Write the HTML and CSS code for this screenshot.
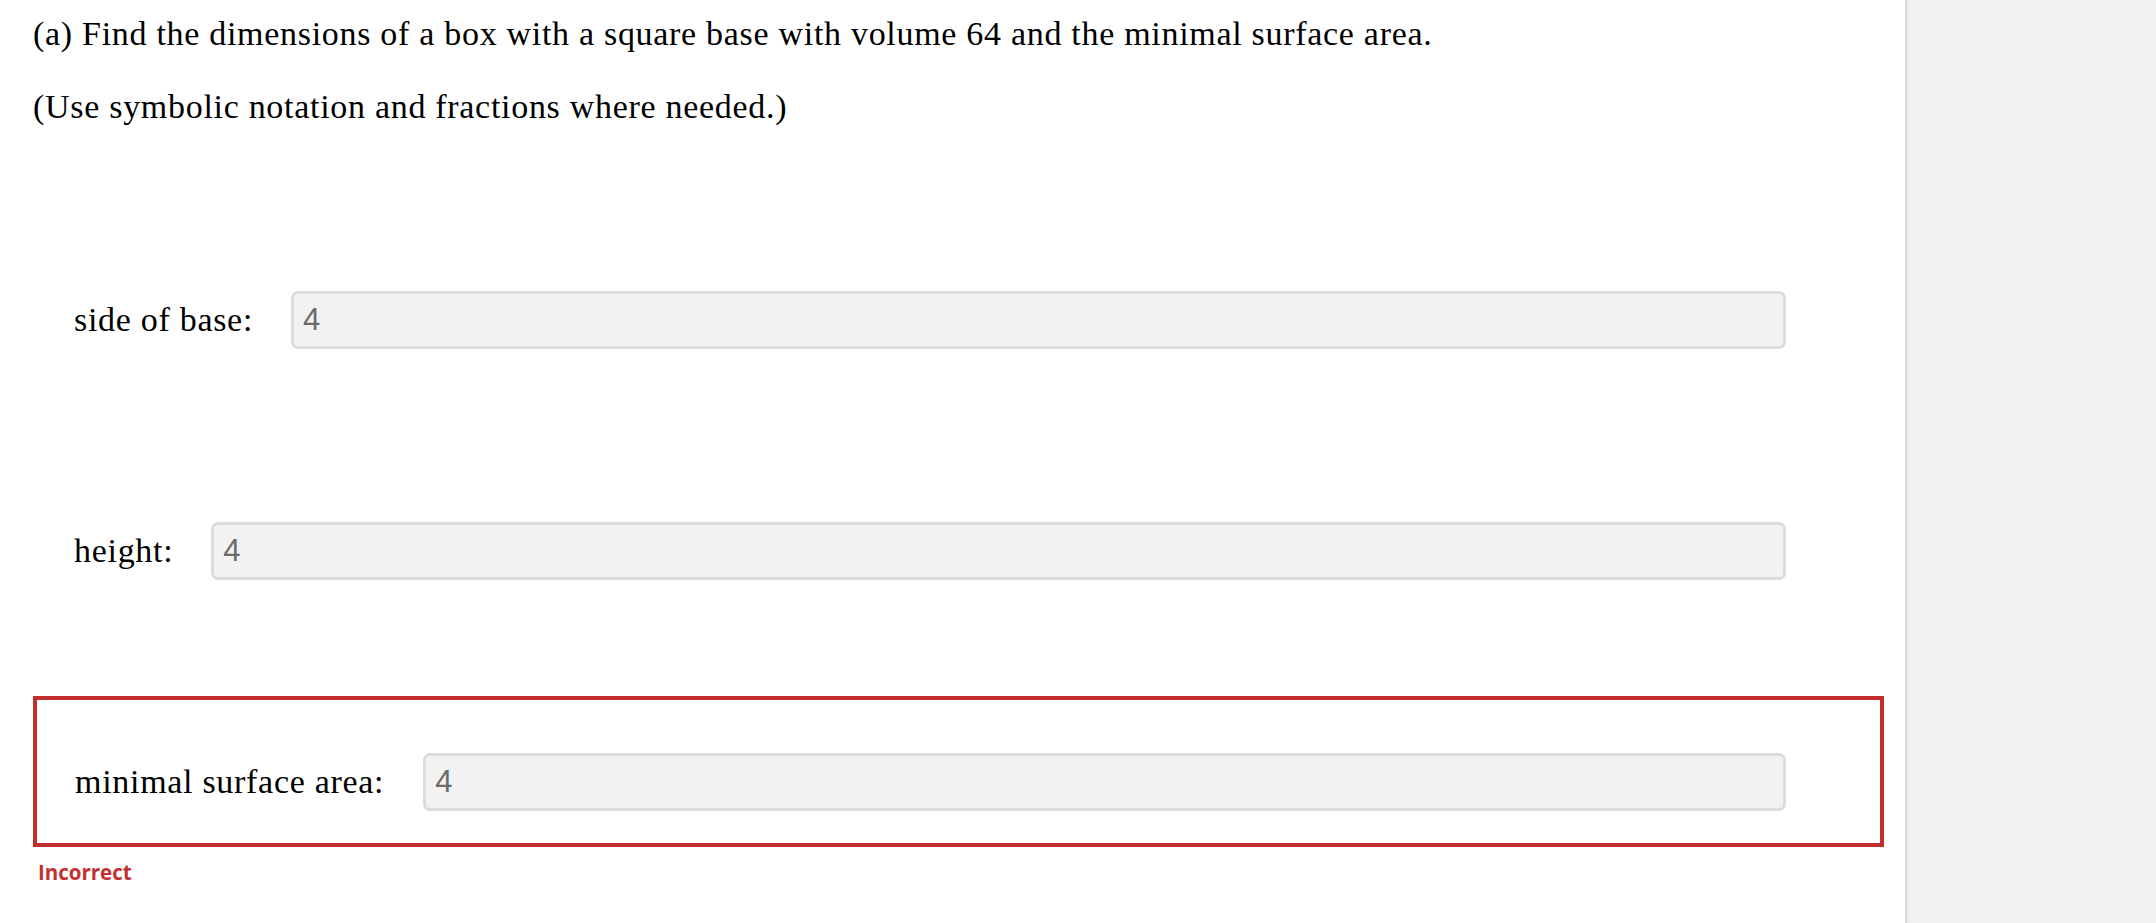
FILE: index.html
```html
<!DOCTYPE html>
<html lang="en">
<head>
<meta charset="utf-8">
<title>Box dimensions</title>
<link rel="stylesheet" href="styles.css">
</head>
<body>
<div class="page">
  <main class="main">
    <p class="question">(a) Find the dimensions of a box with a square base with volume 64 and the minimal surface area.</p>
    <p class="question">(Use symbolic notation and fractions where needed.)</p>

    <div class="answers">
      <div class="row">
        <label class="label">side of base:</label>
        <div class="field">4</div>
      </div>
      <div class="row">
        <label class="label">height:</label>
        <div class="field">4</div>
      </div>
      <div class="row-group">
        <div class="row row-wrong">
          <label class="label">minimal surface area:</label>
          <div class="field">4</div>
        </div>
        <div class="feedback">Incorrect</div>
      </div>
    </div>
  </main>
  <aside class="side"></aside>
</div>
</body>
</html>
```

FILE: styles.css
```css
html, body {
  margin: 0;
  padding: 0;
  background: #ffffff;
}

body {
  font-family: "Liberation Serif", "Times New Roman", serif;
  color: #000;
}

.page {
  display: flex;
  min-height: 100vh;
}

.main {
  flex: 1;
  padding: 14px 21px 0 33px;
}

.question {
  margin: 0 0 33px 0;
  font-size: 34px;
  line-height: 40px;
  letter-spacing: 0.7px;
}

.answers {
  display: flex;
  flex-direction: column;
  gap: 80px;
  margin-top: 107px;
}

.row {
  display: flex;
  align-items: center;
  border: 4px solid transparent;
  padding: 53px 94px 32px 37px;
}

.row-wrong {
  border-color: #c02e2d;
  padding-left: 38px;
}

.label {
  font-size: 34px;
  line-height: 40px;
  letter-spacing: 0.7px;
  margin-right: 38px;
  white-space: nowrap;
}

.row-wrong .label {
  margin-right: 39px;
}

.field {
  flex: 1;
  height: 52px;
  box-sizing: content-box;
  border: 3px solid #dcdcdc;
  border-radius: 7px;
  background: #f2f2f2;
  padding: 0 9px;
  display: flex;
  align-items: center;
  font-family: "Liberation Sans", Arial, sans-serif;
  font-size: 31px;
  color: #6b6b6b;
}

.feedback {
  margin-top: 11px;
  padding-left: 5px;
  font-family: "Open Sans", "Liberation Sans", sans-serif;
  font-weight: 700;
  font-size: 20.5px;
  color: #c4302f;
}

.side {
  width: 249px;
  flex: none;
  background: #f2f2f2;
  border-left: 2px solid #dadada;
  box-shadow: inset 1px 0 1px #e6e6e6;
}
```
